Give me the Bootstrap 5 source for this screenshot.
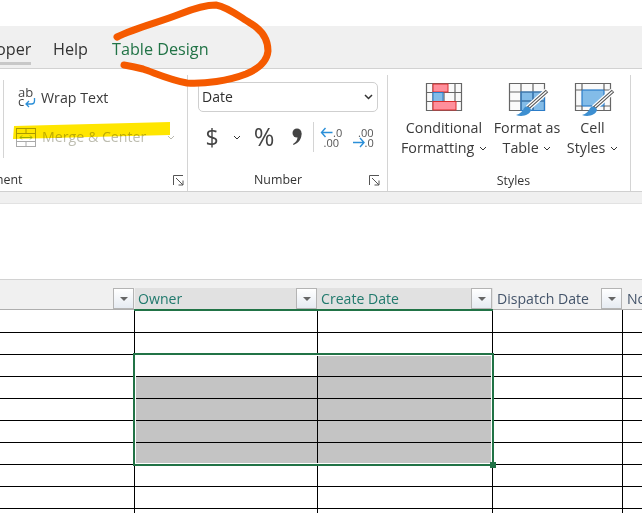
<!DOCTYPE html>
<html lang="en">
<head>
<meta charset="utf-8">
<title>Table Design</title>
<link href="https://cdn.jsdelivr.net/npm/bootstrap@5.3.0/dist/css/bootstrap.min.css" rel="stylesheet">
<style>
html,body{margin:0;height:513px;overflow:hidden;background:#fff}
body{font-family:"Open Sans","Noto Sans","Liberation Sans",sans-serif;color:#333;width:642px;position:relative}
.xl-top{height:26px}
.xl-tabs{height:43px;background:#f0f0f0;border-bottom:1px solid #d2d2d2;font-size:16.2px;line-height:20px;padding-top:13px;overflow:hidden}
.xl-tab{height:23px;white-space:nowrap}
.xl-tab-dev{width:31px;margin-right:22px;border-bottom:3px solid #c8c8c8;height:26px;overflow:hidden}
.xl-tab-dev span{margin-left:-4px;display:block}
.xl-tab-help{margin-right:24px}
.xl-tab-active{color:#217346}
.xl-ribbon{height:122px;border-bottom:1px solid #d0d0d0;box-sizing:content-box;background:#fff;overflow:hidden}
.xl-group{height:116px;margin-top:6px;border-right:1px solid #d4d4d4;flex:none}
.xl-g1{width:188px;padding-left:3px}
.xl-g2{width:200px;padding-left:10px;padding-right:4px}
.xl-g3{width:243px;padding-left:9px}
.xl-align{border-left:1px solid #d4d4d4;height:78px;margin-top:5px;padding-left:14px;padding-top:8px;font-size:14.2px}
.xl-wrap{height:20px;gap:5px;line-height:20px;color:#3a3a3a}
.xl-merge{height:20px;margin-top:19px;gap:6px;line-height:20px;color:#bdbdb0;margin-left:-2px}
.xl-merge-t{width:119px}
.xl-foot{height:16px;font-size:12.4px;line-height:16px;color:#333;margin-top:auto;margin-bottom:3px}
.xl-ment{margin-left:-11px}
.xl-launch{flex:none;margin-right:3px}
.xl-select{height:30px;width:180px;border:1px solid #cfcfcf;border-radius:5px;margin-top:7px;padding-left:3px;font-size:14px;line-height:28px;color:#2f2f2f}
.xl-numrow{height:30px;margin-top:10px;color:#444}
.xl-dollar{width:28px;font-size:23px;text-align:center}
.xl-chev{margin-left:7px}
.xl-pct{width:34px;font-size:25px;text-align:center;margin-left:6px}
.xl-comma{margin-left:10px;flex:none}
.xl-vsep{width:1px;height:30px;background:#d4d4d4;margin-left:10px;margin-right:6px}
.xl-inc2{margin-left:8px}
.xl-style{font-size:14.3px;line-height:20px;text-align:center;color:#3a3a3a;white-space:nowrap;padding-top:8px}
.xl-style svg.xl-big{display:block;margin:0 0 1px calc(50% - 18px);overflow:visible}
.xl-style svg.xl-mini{display:inline;margin:0 0 2px 1px}
.xl-s1{width:94px}
.xl-s2{width:72px}
.xl-s3{width:59px}
.xl-stylelabel{margin-bottom:2px}
.xl-band{height:12px;background:#f0f0f0;border-bottom:1px solid #e2e2e2}
.xl-blank{height:75px}
.xl-sheet{position:relative;width:642px;overflow:hidden}
.xl-head{height:31px;background:#f0f0f0;border-top:1px solid #d2d2d2;border-bottom:1px solid #aeaeae}
.xl-hc{flex:none;height:29px;padding-top:8px;position:relative}
.xl-hlabel{height:21px;display:flex;align-items:center;justify-content:space-between;font-size:14.1px;line-height:21px;padding-left:3px;color:#44546a;white-space:nowrap;overflow:hidden}
.xl-c4 .xl-hlabel,.xl-c5 .xl-hlabel{padding-left:4px}
.xl-hsel .xl-hlabel{background:#e1e1e1;color:#217a6d}
.xl-f{width:21px;height:21px;flex:none;border:1px solid #b4b4b4;background:linear-gradient(#fff,#e6ebf2);display:flex;align-items:center;justify-content:center;margin-right:1px}
.xl-f::after{content:"";border-left:4px solid transparent;border-right:4px solid transparent;border-top:4px solid #666}
.xl-c1{width:135px}.xl-c2{width:183px}.xl-c3{width:175px}.xl-c4{width:130px}.xl-c5{width:19px}
.xl-row{height:22px}
.xl-row1{height:23px}
.xl-cell{flex:none;height:100%;border-right:1px solid #000;border-bottom:1px solid #000}
.xl-row>.xl-c5{border-right:0}
.xl-gray{background:#c4c4c4}
.xl-selbox{position:absolute;left:133px;top:74px;width:361px;height:113px;border:2px solid #217346;pointer-events:none;box-shadow:inset 0 0 0 1px #fff}
.xl-handle{position:absolute;right:-4px;bottom:-4px;width:6px;height:6px;background:#217346}
.xl-greenline{position:absolute;left:134px;top:30px;width:359px;height:2px;background:#217346}
.xl-ink{position:absolute;left:0;top:0;pointer-events:none}
.xl-marker{mix-blend-mode:multiply}
</style>
</head>
<body>
<div class="xl-top"></div>
<div class="xl-tabs d-flex">
  <div class="xl-tab xl-tab-dev"><span>oper</span></div>
  <div class="xl-tab xl-tab-help">Help</div>
  <div class="xl-tab xl-tab-active">Table Design</div>
</div>
<div class="xl-ribbon d-flex">
  <div class="xl-group xl-g1 d-flex flex-column">
    <div class="xl-align">
      <div class="xl-wrap d-flex align-items-center">
        <svg width="18" height="20" viewBox="0 0 18 20"><text x="0" y="9" font-size="13" font-family="Open Sans" fill="#444">ab</text><text x="0" y="18" font-size="13" font-family="Open Sans" fill="#444">c</text><path d="M16.500 10v3a3 3 0 0 1-3 3H8M11 13l-3 3 3 3" fill="none" stroke="#2b8fd8" stroke-width="1.300"/></svg>
        <span>Wrap Text</span>
      </div>
      <div class="xl-merge d-flex align-items-center">
        <svg width="20" height="19" viewBox="0 0 20 19"><rect x=".5" y=".5" width="19" height="18" fill="none" stroke="#aaa"/><path d="M.5 5.500h19M.5 13.500h19M10 .5v5M10 13.500v5" stroke="#aaa"/><path d="M4 9.500h12M6 7.500l-2 2 2 2M14 7.500l2 2-2 2" fill="none" stroke="#9cc09c"/></svg>
        <span class="xl-merge-t">Merge &amp; Center</span>
        <svg width="8" height="5" viewBox="0 0 8 5"><path d="M1 1l3 3 3-3" fill="none" stroke="#b8b8b0"/></svg>
      </div>
    </div>
    <div class="xl-foot d-flex justify-content-between align-items-center">
      <span class="xl-ment">ment</span>
      <svg class="xl-launch" width="11" height="11" viewBox="0 0 11 11"><path d="M.5 10V.5H10M3 3l7 7M10 5.500V10H5.500" fill="none" stroke="#555"/></svg>
    </div>
  </div>
  <div class="xl-group xl-g2 d-flex flex-column">
    <div class="xl-select d-flex justify-content-between align-items-center">
      <span>Date</span>
      <svg class="me-1" width="9" height="6" viewBox="0 0 9 6"><path d="M1 1l3.500 3.500L8 1" fill="none" stroke="#333" stroke-width="1.500"/></svg>
    </div>
    <div class="xl-numrow d-flex align-items-center">
      <span class="xl-dollar">$</span>
      <svg class="xl-chev" width="8" height="5" viewBox="0 0 8 5"><path d="M1 1l3 3 3-3" fill="none" stroke="#333"/></svg>
      <span class="xl-pct">%</span>
      <svg class="xl-comma" width="12" height="20" viewBox="0 0 12 20"><circle cx="6" cy="6" r="4.500" fill="#444"/><path d="M10.500 6C11 11 8 16 2.500 18L2 17C5 15 6.500 13 6.500 10Z" fill="#444"/></svg>
      <span class="xl-vsep"></span>
      <svg width="24" height="24" viewBox="0 0 24 24"><path d="M1.500 7.500h11M5.500 3 1.500 7.500 5.500 12" fill="none" stroke="#2b8fd8" stroke-width="1.400"/><text x="13" y="12" font-size="11" font-family="Open Sans" fill="#555">.0</text><text x="3.500" y="22" font-size="11" font-family="Open Sans" fill="#555">.00</text></svg>
      <svg class="xl-inc2" width="24" height="24" viewBox="0 0 24 24"><text x="6" y="12" font-size="11" font-family="Open Sans" fill="#555">.00</text><path d="M1 17.500h11M8 13l4 4.500-4 4.500" fill="none" stroke="#2b8fd8" stroke-width="1.400"/><text x="12.500" y="22" font-size="11" font-family="Open Sans" fill="#555">.0</text></svg>
    </div>
    <div class="xl-foot d-flex justify-content-between align-items-center">
      <span class="ms-5 ps-2">Number</span>
      <svg class="xl-launch" width="11" height="11" viewBox="0 0 11 11"><path d="M.5 10V.5H10M3 3l7 7M10 5.500V10H5.500" fill="none" stroke="#555"/></svg>
    </div>
  </div>
  <div class="xl-group xl-g3 d-flex flex-column">
    <div class="d-flex">
      <div class="xl-style xl-s1">
        <svg class="xl-big" width="36" height="34" viewBox="0 0 36 34"><rect x=".5" y=".5" width="35" height="27" fill="#fafafa"/><path d="M.5 .5h35v27H.5zM.5 9.500h35M.5 18.500h35M7 .5v27M18 .5v27M29 .5v27" fill="none" stroke="#666" stroke-width="1.200"/><rect x="7" y="1" width="15" height="8" fill="#ff8f9b" stroke="#d82c2c"/><rect x="7" y="9.500" width="10" height="9" fill="#83bce8" stroke="#2b7cc8"/><rect x="7" y="18.500" width="23" height="8.500" fill="#ff8f9b" stroke="#d82c2c"/></svg>
        <div>Conditional</div>
        <div>Formatting <svg class="xl-mini" width="8" height="5" viewBox="0 0 8 5"><path d="M1 1l3 3 3-3" fill="none" stroke="#333"/></svg></div>
      </div>
      <div class="xl-style xl-s2">
        <svg class="xl-big" width="40" height="34" viewBox="0 0 40 34"><rect x=".5" y=".5" width="35" height="27" fill="#fafafa"/><rect x="12" y="9" width="23.500" height="18.500" fill="#83bce8"/><path d="M.5 .5h35v27H.5zM.5 9h35M.5 18h35M12 .5v27M24 .5v27" fill="none" stroke="#666" stroke-width="1.200"/><path d="M12 9h23.500v18.500H12zM12 18h23.500M24 9v18.500" fill="none" stroke="#2b7cc8" stroke-width="1.200"/><path d="M19 25 38 8" stroke="#fff" stroke-width="6"/><path d="M19 25 38 8" stroke="#555" stroke-width="3.600"/><path d="M20 24 37.500 8.500" stroke="#fff" stroke-width="1.400"/><path d="M7 32c6 2.500 14 0 15-5 0-3-5-4.500-7-2-1 3-4 6-8 7z" fill="#3d8fd1"/></svg>
        <div>Format as</div>
        <div>Table <svg class="xl-mini" width="8" height="5" viewBox="0 0 8 5"><path d="M1 1l3 3 3-3" fill="none" stroke="#333"/></svg></div>
      </div>
      <div class="xl-style xl-s3">
        <svg class="xl-big" width="40" height="34" viewBox="0 0 40 34"><rect x=".5" y=".5" width="35" height="27" fill="#fafafa"/><rect x="7" y="7" width="22" height="16" fill="#83bce8" stroke="#2b7cc8" stroke-width="1.200"/><path d="M.5 .5h35v27H.5zM.5 7H7M29 7h6.500M.5 23H7M29 23h6.500M7 .5V7M7 23v4.500M29 .5V7M29 23v4.500" fill="none" stroke="#666" stroke-width="1.200"/><path d="M19 25 38 8" stroke="#fff" stroke-width="6"/><path d="M19 25 38 8" stroke="#555" stroke-width="3.600"/><path d="M20 24 37.500 8.500" stroke="#fff" stroke-width="1.400"/><path d="M7 32c6 2.500 14 0 15-5 0-3-5-4.500-7-2-1 3-4 6-8 7z" fill="#3d8fd1"/></svg>
        <div>Cell</div>
        <div>Styles <svg class="xl-mini" width="8" height="5" viewBox="0 0 8 5"><path d="M1 1l3 3 3-3" fill="none" stroke="#333"/></svg></div>
      </div>
    </div>
    <div class="xl-foot text-center xl-stylelabel">Styles</div>
  </div>
</div>
<div class="xl-band"></div>
<div class="xl-blank"></div>
<div class="xl-sheet">
  <div class="xl-head d-flex">
    <div class="xl-hc xl-c1"><div class="xl-hlabel justify-content-end"><span class="xl-f"></span></div></div>
    <div class="xl-hc xl-c2 xl-hsel"><div class="xl-hlabel"><span>Owner</span><span class="xl-f"></span></div></div>
    <div class="xl-hc xl-c3 xl-hsel"><div class="xl-hlabel"><span>Create Date</span><span class="xl-f"></span></div></div>
    <div class="xl-hc xl-c4"><div class="xl-hlabel"><span>Dispatch Date</span><span class="xl-f"></span></div></div>
    <div class="xl-hc xl-c5"><div class="xl-hlabel"><span>No</span></div></div>
  </div>
  <div class="xl-row xl-row1 d-flex"><div class="xl-cell xl-c1"></div><div class="xl-cell xl-c2"></div><div class="xl-cell xl-c3"></div><div class="xl-cell xl-c4"></div><div class="xl-cell xl-c5"></div></div>
  <div class="xl-row d-flex"><div class="xl-cell xl-c1"></div><div class="xl-cell xl-c2"></div><div class="xl-cell xl-c3"></div><div class="xl-cell xl-c4"></div><div class="xl-cell xl-c5"></div></div>
  <div class="xl-row d-flex"><div class="xl-cell xl-c1"></div><div class="xl-cell xl-c2"></div><div class="xl-cell xl-c3 xl-gray"></div><div class="xl-cell xl-c4"></div><div class="xl-cell xl-c5"></div></div>
  <div class="xl-row d-flex"><div class="xl-cell xl-c1"></div><div class="xl-cell xl-c2 xl-gray"></div><div class="xl-cell xl-c3 xl-gray"></div><div class="xl-cell xl-c4"></div><div class="xl-cell xl-c5"></div></div>
  <div class="xl-row d-flex"><div class="xl-cell xl-c1"></div><div class="xl-cell xl-c2 xl-gray"></div><div class="xl-cell xl-c3 xl-gray"></div><div class="xl-cell xl-c4"></div><div class="xl-cell xl-c5"></div></div>
  <div class="xl-row d-flex"><div class="xl-cell xl-c1"></div><div class="xl-cell xl-c2 xl-gray"></div><div class="xl-cell xl-c3 xl-gray"></div><div class="xl-cell xl-c4"></div><div class="xl-cell xl-c5"></div></div>
  <div class="xl-row d-flex"><div class="xl-cell xl-c1"></div><div class="xl-cell xl-c2 xl-gray"></div><div class="xl-cell xl-c3 xl-gray"></div><div class="xl-cell xl-c4"></div><div class="xl-cell xl-c5"></div></div>
  <div class="xl-row d-flex"><div class="xl-cell xl-c1"></div><div class="xl-cell xl-c2"></div><div class="xl-cell xl-c3"></div><div class="xl-cell xl-c4"></div><div class="xl-cell xl-c5"></div></div>
  <div class="xl-row d-flex"><div class="xl-cell xl-c1"></div><div class="xl-cell xl-c2"></div><div class="xl-cell xl-c3"></div><div class="xl-cell xl-c4"></div><div class="xl-cell xl-c5"></div></div>
  <div class="xl-row d-flex"><div class="xl-cell xl-c1"></div><div class="xl-cell xl-c2"></div><div class="xl-cell xl-c3"></div><div class="xl-cell xl-c4"></div><div class="xl-cell xl-c5"></div></div>
  <div class="xl-greenline"></div>
  <div class="xl-selbox"><span class="xl-handle"></span></div>
</div>
<svg class="xl-ink xl-marker" width="642" height="513" viewBox="0 0 642 513"><path d="M14 126 170 122V135L13 139Z" fill="#ffe600"/></svg>
<svg class="xl-ink" width="642" height="513" viewBox="0 0 642 513"><path d="M117 37C135 28 160 22 180 14 195 8 205 5 216 5 228 7 240 17 250 23 262 30 268 40 268 51 267 62 258 69 246 74 228 81 205 84 187 83 170 80 155 73 143 69 135 67 130 66 124 65" fill="none" stroke="#f55a00" stroke-width="7" stroke-linecap="round" stroke-linejoin="round"/></svg>
</body>
</html>
